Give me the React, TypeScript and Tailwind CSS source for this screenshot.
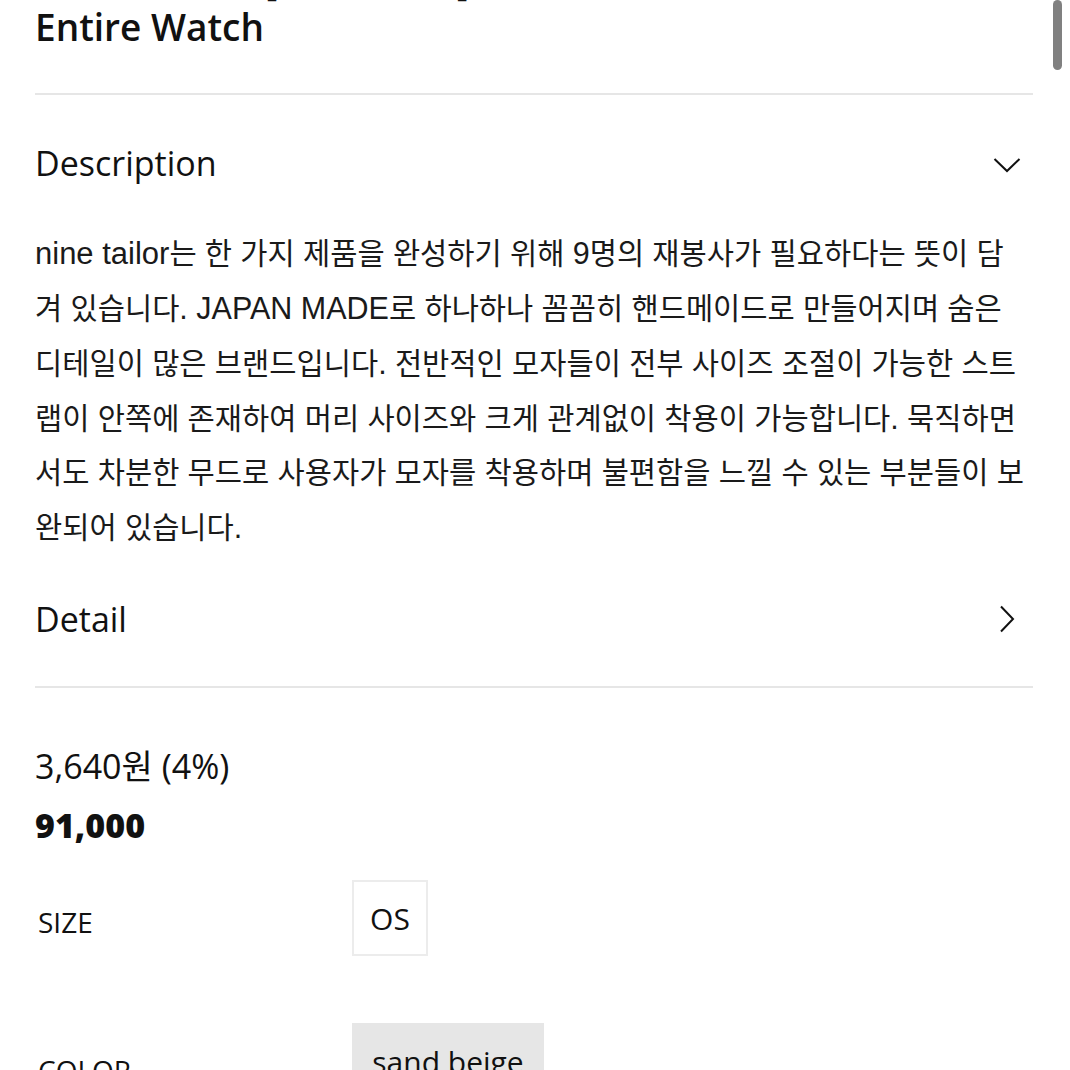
const openSans = "font-['Open_Sans','Noto_Sans_CJK_KR',sans-serif]";

// latin runs are set a touch larger than the hangul so the lines wrap like the original
const L = ({ children, big }: { children: string; big?: boolean }) => (
    <span className={big ? "text-[31px]" : "text-[30.5px]"}>{children}</span>
);

const ChevronDown = () => (
    <svg width="28" height="16" viewBox="0 0 28 16" fill="none">
        <path d="M1.5 2 L14 14 L26.5 2" stroke="#111" strokeWidth="2" />
    </svg>
);

const ChevronRight = () => (
    <svg width="16" height="28" viewBox="0 0 16 28" fill="none">
        <path d="M2 1.5 L14 14 L2 26.5" stroke="#111" strokeWidth="2" />
    </svg>
);

export default function App() {
    return (
        <div className={`relative h-[1070px] w-[1070px] overflow-hidden bg-white text-[#111] ${openSans}`}>
            <div className="absolute right-[8px] top-0 h-[70px] w-[9px] rounded-full bg-[#808080]" />

            <div className="pl-[35px] pr-[37px]">
                <div className="-mt-[41px]">
                    <div className="pl-[230px] text-[37px] font-semibold leading-[44px]">[나인 테일러]</div>
                    <div className="text-[37px] font-semibold leading-[48px]">Entire Watch</div>
                </div>

                <div className="mt-[42px] h-[2px] bg-[#e6e6e6]" />

                <div className="flex h-[136px] items-center justify-between">
                    <span className="text-[34px]">Description</span>
                    <span className="mr-[12px] mt-[4px]"><ChevronDown /></span>
                </div>

                <p className="-mt-[5px] mr-[8px] text-[29.6px] leading-[54px] text-[#1a1a1a] font-['Liberation_Sans','Noto_Sans_CJK_KR',sans-serif]">
                    <L big>nine tailor</L>는 한 가지 제품을 완성하기 위해 <L>9</L>명의 재봉사가 필요하다는 뜻이 담겨 있습니다<L>. JAPAN MADE</L>로 하나하나 꼼꼼히 핸드메이드로 만들어지며 숨은 디테일이 많은 브랜드입니다<L>.</L> 전반적인 모자들이 전부 사이즈 조절이 가능한 스트랩이 안쪽에 존재하여 머리 사이즈와 크게 관계없이 착용이 가능합니다<L>.</L> 묵직하면서도 차분한 무드로 사용자가 모자를 착용하며 불편함을 느낄 수 있는 부분들이 보완되어 있습니다<L>.</L>
                </p>

                <div className="mt-[9px] flex h-[110px] items-center justify-between">
                    <span className="text-[34px]">Detail</span>
                    <span className="mr-[18px]"><ChevronRight /></span>
                </div>

                <div className="mt-[12px] h-[2px] bg-[#e6e6e6]" />

                <div className="mt-[56px] text-[34px] leading-[44px]">3,640원 (4%)</div>
                <div className="mt-[15px] text-[34px] font-extrabold leading-[44px]">91,000</div>

                <div className="mt-[33px] flex items-center">
                    <span className="w-[317px] pl-[3px] pt-[8px] text-[28px]">SIZE</span>
                    <span className="flex h-[76px] w-[76px] items-center justify-center border-2 border-[#ececec] text-[30px]">OS</span>
                </div>

                <div className="mt-[67px] flex items-start">
                    <span className="w-[317px] pl-[3px] pt-[26px] text-[28px]">COLOR</span>
                    <span className="flex h-[76px] w-[192px] items-center justify-center bg-[#e6e6e6] text-[30px]">sand beige</span>
                </div>
            </div>
        </div>
    );
}
